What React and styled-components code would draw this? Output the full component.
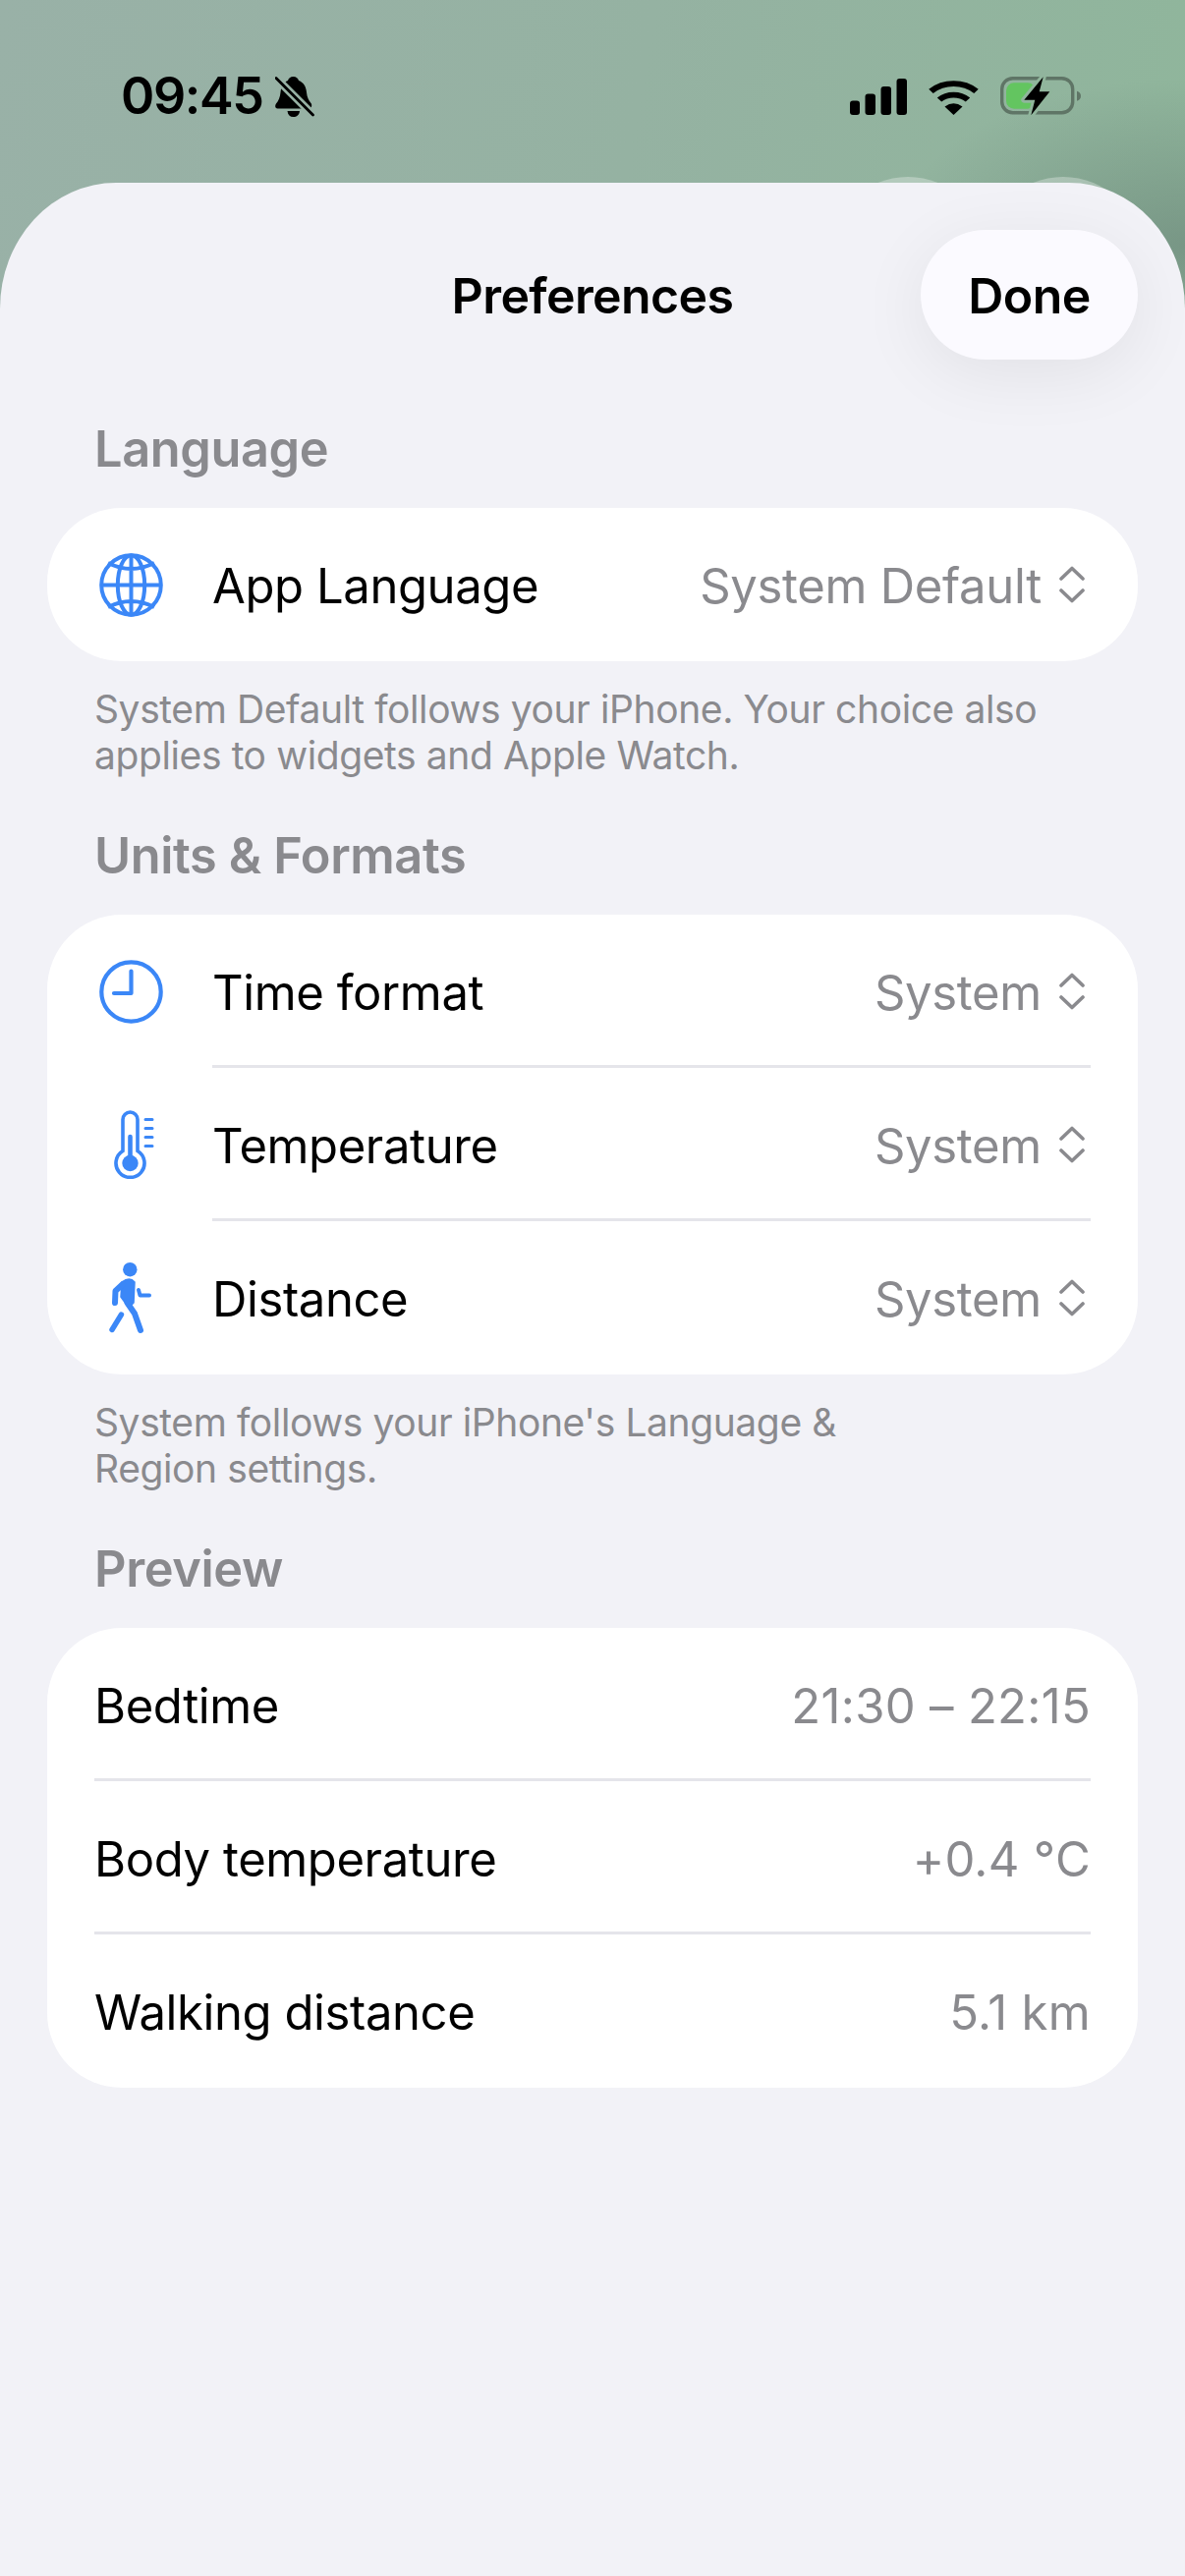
import React from "react";
import styled, { createGlobalStyle } from "styled-components";

const Global = createGlobalStyle`
  html, body { margin: 0; padding: 0; }
  body { font-family: Inter, "Noto Sans", "Liberation Sans", sans-serif; -webkit-font-smoothing: antialiased; }
`;

const BLUE = "#3b87f7";
const GRAY = "#8a8a8e";

const Screen = styled.div`
  width: 1206px; height: 2622px; overflow: hidden; display: flex; flex-direction: column; position: relative;
  background:
    radial-gradient(ellipse 300px 170px at 1206px 250px, rgba(112,140,126,.75), rgba(112,140,126,0)),
    linear-gradient(100deg, #99b1a7 0%, #95b2a2 40%, #8fb69b 78%, #8fb69a 100%);
`;
const StatusBar = styled.div`
  height: 186px; box-sizing: border-box; padding: 67px 106px 0 123px; display: flex; justify-content: space-between; align-items: flex-start; flex: none;
`;
const StatusLeft = styled.div`display: flex; align-items: center; gap: 13px; height: 62px;`;
const StatusRight = styled.div`display: flex; align-items: center; gap: 22px; height: 62px;`;
const Time = styled.span`font-size: 52px; font-weight: 600; letter-spacing: -1.4px; color: #000; line-height: 62px;`;
const GhostButton = styled.div`
  position: absolute; top: 180px; left: ${p => p.$x}px; width: 160px; height: 160px; border-radius: 50%; background: rgba(255,255,255,.3);
`;
const Sheet = styled.div`
  flex: 1; position: relative; background: #f2f2f7; border-radius: 118px 118px 0 0 / 128px 128px 0 0;
  display: flex; flex-direction: column; padding: 48px 48px 0;
`;
const Header = styled.div`display: grid; grid-template-columns: 1fr auto 1fr; align-items: center; height: 132px; margin-bottom: 61px;`;
const Title = styled.div`grid-column: 2; font-size: 50px; font-weight: 600; letter-spacing: -0.6px; color: #000; padding-top: 2px;`;
const Done = styled.button`
  grid-column: 3; justify-self: end; width: 221px; height: 132px; border: none; border-radius: 66px; background: #fbfaff; color: #000;
  font: 600 50px Inter, sans-serif; letter-spacing: -0.5px; box-shadow: 0 14px 70px rgba(0,0,0,.07); padding: 2px 0 0;
`;
const SectionLabel = styled.div`
  font-size: 50.5px; font-weight: 600; letter-spacing: -0.4px; line-height: 60px; color: ${GRAY}; padding-left: 48px; margin-bottom: 30px;
`;
const Card = styled.div`background: #fff; border-radius: 76px; display: flex; flex-direction: column;`;
const Row = styled.div`display: flex; height: 156px; align-items: stretch;`;
const IconSlot = styled.div`width: 168px; flex: none; display: flex; align-items: center; justify-content: center; padding-left: 2px; box-sizing: border-box;`;
const RowBody = styled.div`
  flex: 1; margin-right: 48px; margin-left: ${p => p.$inset ? 48 : 0}px; display: flex; align-items: center; justify-content: space-between; box-sizing: border-box;
  border-bottom: ${p => p.$last ? "none" : "3px solid #e5e5ea"}; padding-top: ${p => p.$last ? 0 : 3}px;
`;
const RowLabel = styled.span`font-size: 49px; letter-spacing: -0.4px; color: #000; font-weight: 400; padding-top: 3px;`;
const ValueWrap = styled.span`display: flex; align-items: center; gap: 18px; padding-right: 6px;`;
const Value = styled.span`font-size: 49px; letter-spacing: -0.3px; color: ${GRAY}; font-weight: 400; padding-top: 3px;`;
const Reading = styled(Value)`letter-spacing: 0.3px;`;
const Footnote = styled.div`
  font-size: 39px; line-height: 47px; letter-spacing: -0.4px; color: ${GRAY}; padding: 25px 48px 49px;
`;

const Globe = () => (
  <svg width="65" height="65" viewBox="0 0 65 65" fill="none" stroke={BLUE} strokeWidth="4">
    <circle cx="32.500" cy="32.500" r="30.300" />
    <ellipse cx="32.500" cy="32.500" rx="13.700" ry="30.300" />
    <path d="M32.500 2.200V62.800M2.200 32.500H62.800M9 10Q32.500 22 56 10M9 55Q32.500 43 56 55" />
  </svg>
);
const Clock = () => (
  <svg width="65" height="65" viewBox="0 0 65 65" fill="none" stroke={BLUE} strokeWidth="4.200" strokeLinecap="round" strokeLinejoin="round">
    <circle cx="32.500" cy="32.500" r="30.200" />
    <path d="M32.500 11.500V34H15" />
  </svg>
);
const Thermo = () => (
  <svg width="41" height="70" viewBox="0 0 41 70" fill="none" stroke={BLUE} strokeWidth="3.600" strokeLinecap="round" style={{ marginLeft: 6 }}>
    <path d="M9 41.500V9.500a7.500 7.500 0 0 1 15 0V41.500A14.500 14.500 0 1 1 9 41.500Z" />
    <path d="M16.500 27V54" strokeWidth="4.600" />
    <circle cx="16.500" cy="54" r="8.200" fill={BLUE} stroke="none" />
    <path d="M32 9.500H39M32 18.500H39M32 27.500H39M32 36.500H39" strokeWidth="3" />
  </svg>
);
const Walk = () => (
  <svg width="46" height="73" viewBox="0 0 46 73" fill="none" stroke={BLUE} strokeLinecap="round" strokeLinejoin="round">
    <circle cx="22.300" cy="7.200" r="7.200" fill={BLUE} stroke="none" />
    <path d="M14 20Q22 14 27 20L26 41L21 46L13 35Z" fill={BLUE} stroke={BLUE} strokeWidth="1.500" />
    <path d="M15 22L7.500 29L7 41" strokeWidth="6" />
    <path d="M19.500 41L27 52L33 69" strokeWidth="6" />
    <path d="M13.500 53L4 68.500" strokeWidth="5.400" />
    <path d="M31 28L32.500 33.500H42" strokeWidth="4" />
  </svg>
);
const Updown = () => (
  <svg width="26" height="38" viewBox="0 0 26 38" fill="none" stroke={GRAY} strokeWidth="3.600" strokeLinecap="round" strokeLinejoin="round">
    <path d="M2 13L13 2.500 24 13M2 25L13 35.500 24 25" />
  </svg>
);
const BellSlash = () => (
  <svg width="40" height="42" viewBox="0 0 40 42">
    <mask id="bm">
      <rect width="40" height="42" fill="#fff" />
      <path d="M-1 .5L40 41.500" stroke="#000" strokeWidth="8" />
    </mask>
    <g mask="url(#bm)" fill="#000">
      <path d="M18.500 1C21.500 1 23.500 3 24 5C29 7 31.500 11 32 17C32.500 22 34 25 36.500 28C38 30 37 33.500 34.500 33.500H2.500C0 33.500 -.5 30.500 1 28.500C3.500 25.500 5 22 5.500 17C6 11 8.500 7 13 5C13.500 3 15.500 1 18.500 1Z" />
      <path d="M12.500 36H25C24.500 40 22 42 18.500 42S13 40 12.500 36Z" />
    </g>
    <path d="M1 2.500L38.500 40" stroke="#000" strokeWidth="2.800" strokeLinecap="round" />
  </svg>
);
const Signal = () => (
  <svg width="58" height="37" viewBox="0 0 58 37" fill="#000">
    <rect x="0" y="22.500" width="10" height="14.500" rx="3" />
    <rect x="15.500" y="15.500" width="10.500" height="21.500" rx="3" />
    <rect x="31.500" y="8" width="10.500" height="29" rx="3" />
    <rect x="47.500" y="0" width="10.500" height="37" rx="3" />
  </svg>
);
const Wifi = () => (
  <svg width="51" height="37" viewBox="0 0 51 43" fill="none" stroke="#000" strokeWidth="6.600" preserveAspectRatio="none">
    <path d="M2.500 15A34 34 0 0 1 48.500 15" />
    <path d="M11 25A21.500 21.500 0 0 1 40 25" />
    <path d="M25.500 43L16.500 33Q25.500 25.500 34.500 33Z" fill="#000" stroke="none" />
  </svg>
);
const Battery = () => (
  <svg width="82" height="40" viewBox="0 0 82 40" fill="none">
    <rect x="1.700" y="1.700" width="72" height="35" rx="11" stroke="#5f7566" strokeWidth="3.400" />
    <path d="M78 14.700C80.500 15.500 82 17 82 19.700S80.500 24 78 24.700Z" fill="#5f7566" />
    <rect x="6" y="6.300" width="30" height="26.400" rx="8" fill="#63c560" />
    <path d="M43.700 .3L24.300 23.700H35.300L31.300 39.300L50.300 15.300H39.700Z" fill="#000" stroke="#90b59c" strokeWidth="6" paintOrder="stroke" strokeLinejoin="round" />
  </svg>
);

const SelectRow = ({ icon, label, value, last }) => (
  <Row>
    <IconSlot>{icon}</IconSlot>
    <RowBody $last={last}>
      <RowLabel>{label}</RowLabel>
      <ValueWrap><Value>{value}</Value><Updown /></ValueWrap>
    </RowBody>
  </Row>
);
const PreviewRow = ({ label, value, last }) => (
  <Row>
    <RowBody $inset $last={last}>
      <RowLabel>{label}</RowLabel>
      <Reading>{value}</Reading>
    </RowBody>
  </Row>
);

export default function App() {
  return (
    <Screen>
      <Global />
      <StatusBar>
        <StatusLeft><Time>09:45</Time><BellSlash /></StatusLeft>
        <StatusRight><Signal /><Wifi /><Battery /></StatusRight>
      </StatusBar>
      <GhostButton $x={844} />
      <GhostButton $x={1002} />
      <Sheet>
        <Header>
          <Title>Preferences</Title>
          <Done>Done</Done>
        </Header>
        <SectionLabel>Language</SectionLabel>
        <Card>
          <SelectRow icon={<Globe />} label="App Language" value="System Default" last />
        </Card>
        <Footnote>System Default follows your iPhone. Your choice also<br />applies to widgets and Apple Watch.</Footnote>
        <SectionLabel>Units &amp; Formats</SectionLabel>
        <Card>
          <SelectRow icon={<Clock />} label="Time format" value="System" />
          <SelectRow icon={<Thermo />} label="Temperature" value="System" />
          <SelectRow icon={<Walk />} label="Distance" value="System" last />
        </Card>
        <Footnote>System follows your iPhone's Language &amp;<br />Region settings.</Footnote>
        <SectionLabel>Preview</SectionLabel>
        <Card>
          <PreviewRow label="Bedtime" value="21:30 – 22:15" />
          <PreviewRow label="Body temperature" value="+0.4 °C" />
          <PreviewRow label="Walking distance" value="5.1 km" last />
        </Card>
      </Sheet>
    </Screen>
  );
}
